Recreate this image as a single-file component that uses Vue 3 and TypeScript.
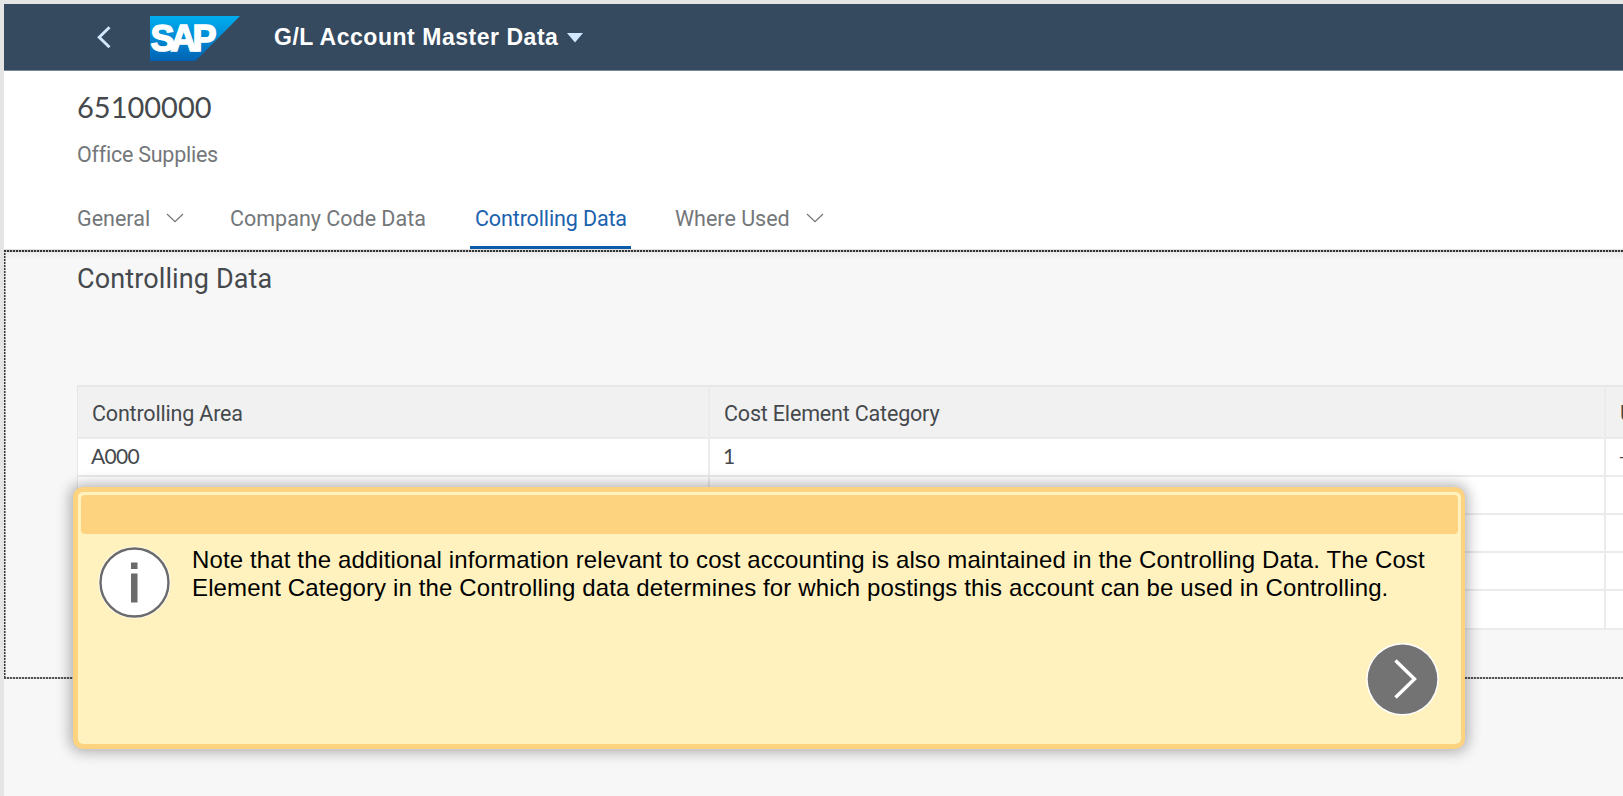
<script setup lang="ts">
interface Tab {
  label: string
  key: string
  menu?: boolean
  active?: boolean
}

const tabs: Tab[] = [
  { label: 'General', key: 'general', menu: true },
  { label: 'Company Code Data', key: 'company' },
  { label: 'Controlling Data', key: 'controlling', active: true },
  { label: 'Where Used', key: 'where', menu: true },
]

const rows: string[][] = [
  ['A000', '1', '–'],
  ['', '', ''],
  ['', '', ''],
  ['', '', ''],
  ['', '', ''],
]
</script>

<template>
  <div class="screen">
    <header class="shell">
      <svg class="back" width="16" height="24" viewBox="0 0 16 24">
        <path d="M13.5 2.2 3.2 12.2 13.5 22.2" fill="none" stroke="#d1e8ff" stroke-width="2.9" />
      </svg>
      <svg class="logo" width="90" height="45" viewBox="0 0 90 45">
        <defs>
          <linearGradient id="logo-blue" x1="0" y1="0" x2="0" y2="1">
            <stop offset="0" stop-color="#00aeef" />
            <stop offset="0.35" stop-color="#0094dc" />
            <stop offset="1" stop-color="#0062b4" />
          </linearGradient>
        </defs>
        <path d="M0 0H90L45.500 45H0Z" fill="url(#logo-blue)" />
        <text class="logo-text" x="0.500" y="35">SAP</text>
      </svg>
      <h1 class="app-title">G/L Account Master Data</h1>
      <svg class="caret" width="16" height="10" viewBox="0 0 16 10"><path d="M0 0H16L8 9.500Z" fill="#d1e8ff" /></svg>
    </header>

    <section class="object-head">
      <div class="account">65100000</div>
      <div class="account-name">Office Supplies</div>
      <nav class="tabs">
        <a v-for="tab in tabs" :key="tab.key" class="tab" :class="[tab.key, { active: tab.active }]">
          <span class="tab-label">{{ tab.label }}</span>
          <svg v-if="tab.menu" class="chevron" width="18" height="10" viewBox="0 0 18 10">
            <path d="M1 1 9 8.600 17 1" fill="none" stroke="#74777a" stroke-width="1.300" />
          </svg>
        </a>
      </nav>
    </section>

    <main class="content">
      <h2 class="section-title">Controlling Data</h2>
      <div class="grid">
        <div class="row head">
          <div class="cell">Controlling Area</div>
          <div class="cell">Cost Element Category</div>
          <div class="cell">U</div>
        </div>
        <div v-for="(row, i) in rows" :key="i" class="row">
          <div v-for="(value, j) in row" :key="j" class="cell">{{ value }}</div>
        </div>
      </div>
    </main>

    <aside class="note">
      <div class="note-bar"></div>
      <div class="note-body">
        <svg class="info" width="74" height="74" viewBox="0 0 74 74">
          <circle cx="37.500" cy="37.500" r="36" fill="#fff" />
          <circle cx="37.500" cy="37.500" r="34" fill="#fff" stroke="#6b6b6b" stroke-width="2.400" />
          <path d="M34 17.500h6.500v6.500h-6.500zM34 28.500h6.500v29h-6.500z" fill="#6b6b6b" />
        </svg>
        <p class="note-text">
          <span class="line">Note that the additional information relevant to cost accounting is also maintained in the Controlling Data. The Cost</span>
          <span class="line">Element Category in the Controlling data determines for which postings this account can be used in Controlling.</span>
        </p>
      </div>
      <svg class="next" width="74" height="74" viewBox="0 0 74 74">
        <circle cx="36.500" cy="37.300" r="36.300" fill="#fff" />
        <circle cx="36.500" cy="37.300" r="34.800" fill="#737373" />
        <path d="M29.500 18.500 48.500 37 29.500 55.500" fill="none" stroke="#fff" stroke-width="3.400" />
      </svg>
    </aside>
  </div>
</template>

<style>
body {
  margin: 0;
  overflow: hidden;
}
</style>

<style scoped>
.screen {
  position: relative;
  box-sizing: border-box;
  width: 1623px;
  height: 796px;
  padding: 4px 0 0 4px;
  overflow: hidden;
  background: linear-gradient(#e5e5e5, #e5e5e5) 0 0 / 4px 100% no-repeat, linear-gradient(#e5e5e5, #e5e5e5) 0 0 / 100% 4px no-repeat, #f7f7f7;
  font-family: Roboto, "Liberation Sans", sans-serif;
  color: #45494d;
}
.shell {
  display: flex;
  height: 66px;
  background: #354a5f;
  border-bottom: 1px solid #7b8896;
}
.back {
  margin: 21px 0 0 92px;
}
.logo {
  margin: 12px 0 0 38px;
}
.logo-text {
  font: 900 36px "Liberation Sans", Arial, sans-serif;
  letter-spacing: -4px;
  fill: #fff;
  stroke: #fff;
  stroke-width: 1.6;
}
.app-title {
  margin: 0 0 0 34px;
  width: 293px;
  font-family: "Liberation Sans", Arial, sans-serif;
  font-size: 23px;
  font-weight: 700;
  line-height: 66px;
  letter-spacing: 0.53px;
  color: #fff;
  white-space: nowrap;
}
.caret {
  margin-top: 29px;
}
.object-head {
  box-sizing: border-box;
  height: 179px;
  padding: 16px 0 0 73px;
  background: linear-gradient(#e2e2e2, #e2e2e2) 0 100% / 100% 1px no-repeat, #fff;
}
.account {
  height: 40px;
  line-height: 40px;
  font-family: Lato, sans-serif;
  font-size: 29px;
}
.account-name {
  margin-top: 13px;
  line-height: 30px;
  font-size: 21.5px;
  letter-spacing: -0.25px;
  color: #74777a;
}
.tabs {
  display: flex;
  margin-top: 29px;
  font-size: 21.5px;
  color: #74777a;
}
.tab {
  display: flex;
  box-sizing: border-box;
  height: 50px;
  line-height: 40px;
  white-space: nowrap;
}
.chevron {
  margin: 14px 0 0 16px;
}
.general { width: 153px; }
.company { width: 240px; }
.controlling {
  width: 161px;
  padding-left: 5px;
  background: linear-gradient(#0a5cab, #0a5cab) 0 100% / 100% 3px no-repeat;
  color: #1b62ad;
  letter-spacing: -0.13px;
}
.where { margin-left: 44px; }
.content {
  box-sizing: border-box;
  height: 429px;
  padding: 12px 0 0 73px;
  background:
    repeating-linear-gradient(90deg, #333 0 2px, #c4c4c4 2px 3px) 0 0 / 100% 2px no-repeat,
    repeating-linear-gradient(90deg, #555 0 2px, #d0d0d0 2px 3px) 0 100% / 100% 2px no-repeat,
    repeating-linear-gradient(#333 0 2px, #e0e0e0 2px 3px) 0 0 / 1.5px 100% no-repeat,
    linear-gradient(#e8e8e8, #f7f7f7 9px);
}
.section-title {
  margin: 0;
  height: 34px;
  line-height: 34px;
  font-size: 27px;
  font-weight: 400;
  letter-spacing: 0.12px;
}
.grid {
  width: 1546px;
  margin-top: 89px;
  font-size: 21.5px;
  border: solid #e7e7e7;
  border-width: 2px 0 0 1px;
}
.row {
  display: grid;
  grid-template-columns: 632px 896px 18px;
  height: 38px;
  background: #fff;
}
.row:last-child {
  height: 39px;
}
.row.head {
  height: 52px;
  background: #f1f1f1;
}
.cell {
  box-sizing: border-box;
  padding-left: 13px;
  line-height: 34px;
  border: solid #ebebeb;
  border-width: 0 2px 2px 0;
  white-space: nowrap;
  overflow: hidden;
  font-family: Lato, sans-serif;
  font-size: 21px;
  letter-spacing: -0.7px;
}
.cell:last-child {
  padding-left: 12px;
  border-right: 0;
}
.head .cell {
  padding-left: 14px;
  line-height: 53px;
  font-family: Roboto, sans-serif;
  font-size: 21.5px;
  letter-spacing: -0.18px;
}
.note {
  position: absolute;
  left: 73px;
  top: 487px;
  box-sizing: border-box;
  width: 1392px;
  height: 262px;
  padding: 3px;
  border: 5px solid #fed37f;
  border-right-width: 4px;
  border-radius: 10px;
  background: #fff2bf;
  box-shadow: 0 0 14px 3px rgba(0, 0, 0, 0.3);
}
.note-bar {
  height: 39px;
  border-radius: 4px;
  background: #fed37f;
}
.note-body {
  display: flex;
  padding: 11px 0 0 16px;
}
.note-text {
  margin: 1px 0 0 21px;
  font: 24px/28px "Liberation Sans", Arial, sans-serif;
  letter-spacing: 0.13px;
  color: #000;
}
.line {
  display: block;
  white-space: nowrap;
}
.next {
  position: absolute;
  right: 21px;
  bottom: 28px;
}
</style>
